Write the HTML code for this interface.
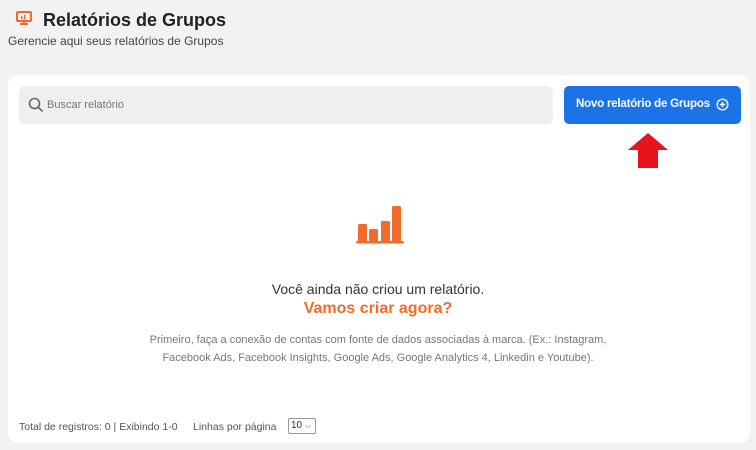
<!DOCTYPE html><html><head><style>
body{margin:0;width:756px;height:450px;background:#f2f2f2;font-family:"Liberation Sans",sans-serif;position:relative;overflow:hidden}
.a{position:absolute}
</style></head><body>
<svg class="a" style="left:16px;top:11px" width="16" height="14" viewBox="0 0 16 14"><rect x="1" y="1" width="14" height="9" rx="1" fill="none" stroke="#f26b2a" stroke-width="2"/><rect x="7" y="10" width="2" height="3" fill="#f26b2a"/><rect x="4" y="12" width="8" height="2" fill="#f26b2a"/><rect x="5" y="5" width="1.5" height="3" fill="#f26b2a"/><rect x="8" y="4" width="1.5" height="4" fill="#f26b2a"/></svg>
<div class="a" style="left:43px;top:10px;font-size:18px;font-weight:bold;color:#222">Relatórios de Grupos</div>
<div class="a" style="left:8px;top:34px;font-size:12px;color:#444">Gerencie aqui seus relatórios de Grupos</div>
<div class="a" style="left:8px;top:75px;width:742px;height:368px;background:#fff;border-radius:10px"></div>
<div class="a" style="left:19px;top:86px;width:534px;height:38px;background:#efefef;border-radius:6px"></div>
<svg class="a" style="left:28px;top:97px" width="16" height="16" viewBox="0 0 16 16"><circle cx="6.5" cy="6.5" r="5" fill="none" stroke="#666" stroke-width="1.6"/><line x1="10.2" y1="10.2" x2="14.5" y2="14.5" stroke="#666" stroke-width="1.6"/></svg>
<div class="a" style="left:47px;top:99px;font-size:11px;color:#777">Buscar relatório</div>
<div class="a" style="left:564px;top:86px;width:177px;height:38px;background:#1c73e8;border-radius:5px"></div>
<div class="a" style="left:576px;top:98px;font-size:11.5px;color:#fff;font-weight:bold;letter-spacing:-0.2px">Novo relatório de Grupos</div>
<svg class="a" style="left:716px;top:98px" width="13" height="13" viewBox="0 0 13 13"><circle cx="6.5" cy="6.5" r="5.3" fill="none" stroke="#fff" stroke-width="1.4"/><path d="M6.5 3.8v5.4M3.8 6.5h5.4" stroke="#fff" stroke-width="1.4"/></svg>
<svg class="a" style="left:627px;top:132px" width="42" height="37" viewBox="0 0 42 37"><path d="M21 1 L41 18 L31 18 L31 36 L11 36 L11 18 L1 18Z" fill="#e8141c"/></svg>
<svg class="a" style="left:355px;top:204px" width="50" height="40" viewBox="0 0 50 40"><g fill="#f26b2a"><rect x="3" y="20" width="9" height="19" rx="1.5"/><rect x="14" y="25" width="9" height="14" rx="1.5"/><rect x="26" y="17" width="9" height="22" rx="1.5"/><rect x="37" y="2" width="9" height="37" rx="1.5"/><rect x="1" y="37" width="48" height="2.5" rx="1"/></g></svg>
<div class="a" style="left:0;width:756px;top:281px;text-align:center;font-size:14px;color:#333">Você ainda não criou um relatório.</div>
<div class="a" style="left:0;width:756px;top:300px;text-align:center;font-size:16px;font-weight:bold;color:#f26b2a">Vamos criar agora?</div>
<div class="a" style="left:0;width:756px;top:331px;text-align:center;font-size:11px;line-height:18px;color:#777">Primeiro, faça a conexão de contas com fonte de dados associadas à marca. (Ex.: Instagram,<br>Facebook Ads, Facebook Insights, Google Ads, Google Analytics 4, Linkedin e Youtube).</div>
<div class="a" style="left:19px;top:421px;font-size:10.5px;color:#555">Total de registros: 0 | Exibindo 1-0</div>
<div class="a" style="left:193px;top:421px;font-size:10.5px;color:#555">Linhas por página</div>
<div class="a" style="left:288px;top:418px;width:28px;height:16px;border:1px solid #999;border-radius:2px;font-size:10px;color:#333;line-height:14px;box-sizing:border-box;padding-left:2px">10 <span style="font-size:8px;color:#666">⌵</span></div>
</body></html>
